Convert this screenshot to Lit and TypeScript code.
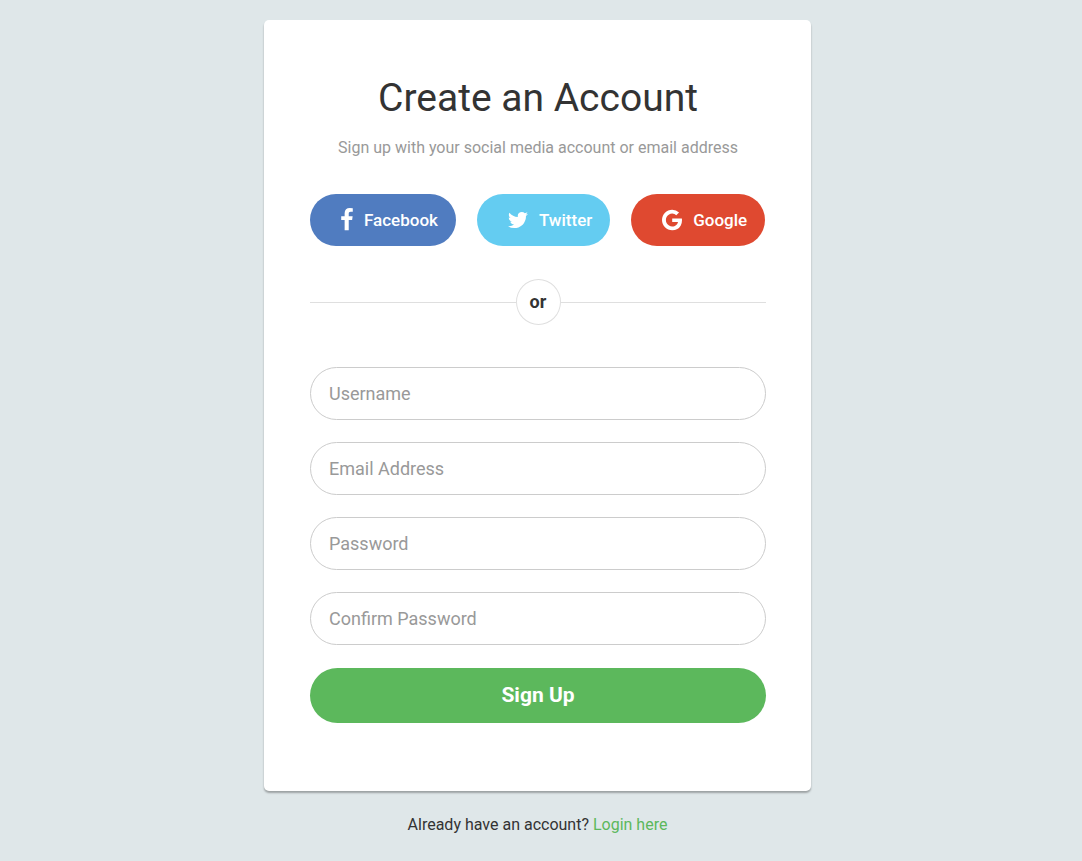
import { LitElement, html, css, svg } from "lit";
import { customElement } from "lit/decorators.js";

const facebookIcon = svg`<path d="M1343 12v264h-157q-86 0-116 36t-30 108v189h293l-39 296h-254v759h-306v-759h-255v-296h255v-218q0-186 104-288.500t277-102.500q147 0 228 12z"/>`;
const twitterIcon = svg`<path d="M1684 408q-67 98-162 167 1 14 1 42 0 130-38 259.500t-115.500 248.500-184.500 210.500-258 146-323 54.500q-271 0-496-145 35 4 78 4 225 0 401-138-105-2-188-64.500t-114-159.500q33 5 61 5 43 0 85-11-112-23-185.500-111.500t-73.500-205.500v-4q68 38 146 41-66-44-105-115t-39-154q0-88 44-163 121 149 294.500 238.500t371.500 99.500q-8-38-8-74 0-134 94.500-228.500t228.500-94.500q140 0 236 102 109-21 205-78-37 115-142 178 93-10 186-50z"/>`;
const googleIcon = svg`<path d="M896 786h725q12 67 12 128 0 217-91 387.500t-259.500 266.500-386.500 96q-157 0-299-60.500t-245-163.500-163.500-245-60.500-299 60.500-299 163.500-245 245-163.500 299-60.500q300 0 515 201l-209 201q-123-119-306-119-129 0-238.500 65t-173.500 176.500-64 243.500 64 243.500 173.500 176.500 238.500 65q87 0 160-24t120-60 82-82 51.500-87 22.500-78h-436v-264z"/>`;

const providers = [
  { name: "Facebook", cls: "facebook", box: "479 0 864 1792", width: 12, icon: facebookIcon },
  { name: "Twitter", cls: "twitter", box: "108 0 1576 1792", width: 20, icon: twitterIcon },
  { name: "Google", cls: "google", box: "128 0 1505 1792", width: 20, icon: googleIcon },
];

const fields = [
  { id: "username", label: "Username", type: "text" },
  { id: "email", label: "Email Address", type: "email" },
  { id: "password", label: "Password", type: "password" },
  { id: "confirm", label: "Confirm Password", type: "password" },
];

@customElement("app-root")
export class AppRoot extends LitElement {
  static styles = css`
    :host {
      display: block;
      box-sizing: border-box;
      min-height: 100vh;
      padding: 20px 7px 20px 0;
      background: #dfe7e9;
      color: #333;
      font: 16px/24px Roboto, sans-serif;
    }
    * {
      box-sizing: border-box;
    }
    .card {
      max-width: 547px;
      margin: 0 auto;
      padding: 50px 45px 68px 46px;
      background: #fff;
      border-radius: 5px;
      box-shadow: 0 2px 2px rgba(0, 0, 0, 0.3);
    }
    .title {
      margin: 0;
      font-size: 39px;
      line-height: 56px;
      font-weight: 400;
      text-align: center;
    }
    .hint {
      margin: 10px 0 34px;
      color: #999;
      text-align: center;
    }
    .social {
      display: flex;
      flex-wrap: wrap;
      gap: 21px;
    }
    .provider {
      display: flex;
      align-items: center;
      gap: 11px;
      height: 52px;
      padding: 0 18px 1px 31px;
      border: 0;
      border-radius: 26px;
      color: #fff;
      font: 500 17px/24px Roboto, sans-serif;
      cursor: pointer;
    }
    .facebook {
      background: #507cc0;
    }
    .twitter {
      background: #64ccf1;
    }
    .google {
      background: #df4930;
    }
    .icon {
      height: 24px;
      fill: currentColor;
    }
    .divider {
      display: flex;
      align-items: center;
      margin: 33px 0 42px;
    }
    .divider::before,
    .divider::after {
      content: "";
      flex: 1;
      height: 1px;
      background: #dfdfdf;
    }
    .or {
      display: grid;
      place-items: center;
      width: 45px;
      height: 46px;
      border: 1px solid #dfdfdf;
      border-radius: 50%;
      font-size: 18px;
      font-weight: 700;
    }
    .form {
      display: grid;
      gap: 22px;
    }
    .field {
      display: grid;
      align-items: center;
    }
    .label,
    .input {
      grid-area: 1 / 1;
      font: 18px/24px Roboto, sans-serif;
    }
    .label {
      z-index: 1;
      justify-self: start;
      margin-left: 19px;
      color: #999;
      pointer-events: none;
    }
    .input {
      width: 100%;
      height: 53px;
      padding: 0 18px;
      border: 1px solid #ccc;
      border-radius: 27px;
      background: #fff;
      color: #333;
      outline-color: #5cb85c;
    }
    .input:not(:placeholder-shown) + .label {
      visibility: hidden;
    }
    .submit {
      height: 55px;
      margin-top: 1px;
      padding: 0 0 2px;
      border: 0;
      border-radius: 28px;
      background: #5cb85c;
      color: #fff;
      font: 700 21px/24px Roboto, sans-serif;
      cursor: pointer;
    }
    .login {
      margin: 22px 0 0;
      text-align: center;
    }
    .link {
      color: #5cb85c;
      text-decoration: none;
    }
  `;

  render() {
    return html`
      <main class="card">
        <h1 class="title">Create an Account</h1>
        <p class="hint">Sign up with your social media account or email address</p>
        <div class="social">
          ${providers.map(
            (p) => html`<button type="button" class="provider ${p.cls}">
              <svg class="icon" width=${p.width} viewBox=${p.box} aria-hidden="true">${p.icon}</svg>
              <span>${p.name}</span>
            </button>`
          )}
        </div>
        <div class="divider"><span class="or">or</span></div>
        <form class="form" @submit=${(e: Event) => e.preventDefault()}>
          ${fields.map(
            (f) => html`<div class="field">
              <input class="input" id=${f.id} name=${f.id} type=${f.type} placeholder=" " required />
              <label class="label" for=${f.id}>${f.label}</label>
            </div>`
          )}
          <button type="submit" class="submit">Sign Up</button>
        </form>
      </main>
      <p class="login">Already have an account? <a class="link" href="#login">Login here</a></p>
    `;
  }
}
